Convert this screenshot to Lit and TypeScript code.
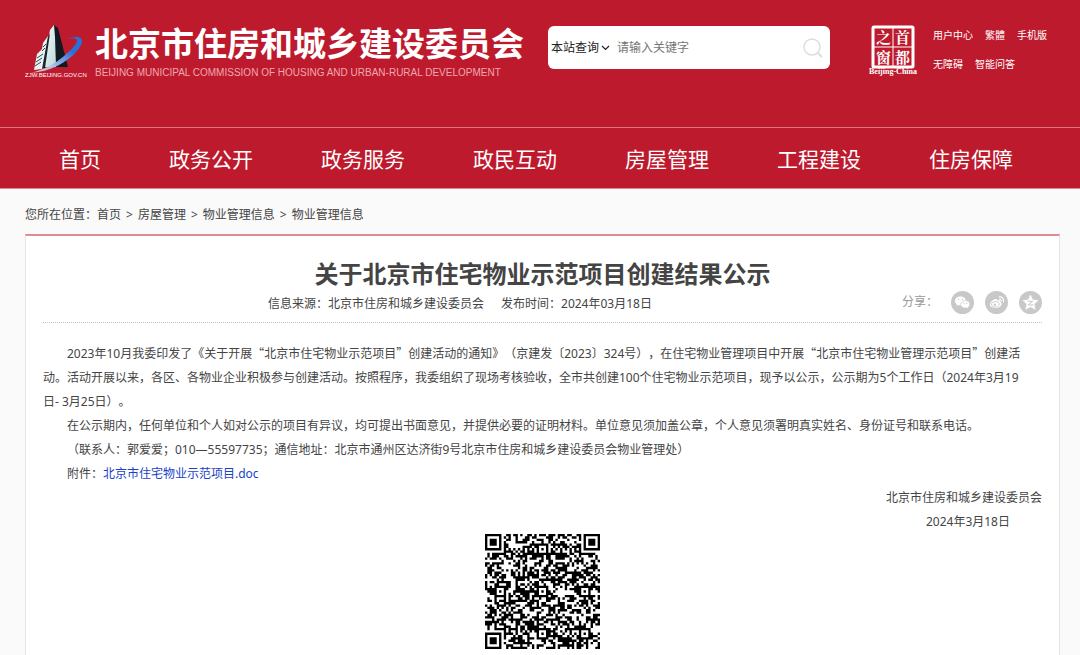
import { LitElement, html, css } from "lit";
import { customElement } from "lit/decorators.js";

const NAV = ["首页", "政务公开", "政务服务", "政民互动", "房屋管理", "工程建设", "住房保障"];
const CRUMBS = ["首页", "房屋管理", "物业管理信息", "物业管理信息"];
const LINKS = ["用户中心", "繁體", "手机版", "无障碍", "智能问答"];

/** Builds the module path of a 49 x 49 code: finders, timing, alignment and data cells. */
function qrPath(): string {
  const n = 49;
  const centers = [6, 24, 42];
  let seed = 20240318;
  const next = (): number => {
    seed = (seed + 0x6d2b79f5) | 0;
    let t = Math.imul(seed ^ (seed >>> 15), 1 | seed);
    t = (t + Math.imul(t ^ (t >>> 7), 61 | t)) ^ t;
    return ((t ^ (t >>> 14)) >>> 0) / 4294967296;
  };
  const finder = (x: number, y: number): number | null => {
    for (const [fx, fy] of [[3, 3], [n - 4, 3], [3, n - 4]]) {
      const d = Math.max(Math.abs(x - fx), Math.abs(y - fy));
      if (d <= 4) return d === 4 || d === 2 ? 0 : 1;
    }
    return null;
  };
  const align = (x: number, y: number): number | null => {
    for (const cx of centers)
      for (const cy of centers) {
        const d = Math.max(Math.abs(x - cx), Math.abs(y - cy));
        if (d <= 2) return d === 1 ? 0 : 1;
      }
    return null;
  };
  let path = "";
  for (let y = 0; y < n; y++)
    for (let x = 0; x < n; x++) {
      const data = next() < 0.53 ? 1 : 0;
      const timing = x === 6 || y === 6 ? (x + y + 1) % 2 : null;
      if (finder(x, y) ?? align(x, y) ?? timing ?? data) path += `M${x} ${y}h1v1h-1z`;
    }
  return path;
}

@customElement("app-root")
export class AppRoot extends LitElement {
  static styles = css`
    :host {
      display: block;
      min-height: 100vh;
      background: #fafafa;
      color: #444;
      font: 12px/24px "Noto Sans", "Noto Sans CJK SC", sans-serif;
      text-spacing-trim: space-all;
    }
    * { box-sizing: border-box; }
    a { color: inherit; text-decoration: none; }
    h1, p, ul, ol { margin: 0; padding: 0; }
    ul, ol { list-style: none; }
    .banner { background: #be1a2d; color: #fff; border-bottom: 1px solid #dc8a93; }
    .top {
      display: flex;
      align-items: flex-start;
      height: 127px;
      padding: 20px 0 0 24px;
    }
    .brand { display: flex; flex: none; width: 524px; }
    .emblem { flex: none; width: 64px; height: 60px; margin-right: 7px; }
    .site { font: 700 33px/44px "Noto Sans CJK SC", sans-serif; white-space: nowrap; }
    .site-en {
      font: 10px/18px "Liberation Sans", sans-serif;
      color: #f0a8af;
      white-space: nowrap;
    }
    .search {
      display: flex;
      align-items: center;
      flex: 0 1 282px;
      height: 43px;
      margin-top: 6px;
      padding: 0 6px 0 3px;
      background: #fff;
      border-radius: 6px;
    }
    .pick { display: flex; align-items: center; position: relative; }
    .pick select {
      appearance: none;
      border: 0;
      background: none;
      width: 62px;
      padding: 0;
      color: #222;
      font: inherit;
    }
    .pick svg { position: absolute; right: 3px; width: 9px; height: 6px; pointer-events: none; }
    .search input {
      flex: 1;
      min-width: 0;
      margin-left: 4px;
      padding: 0;
      border: 0;
      outline: 0;
      background: none;
      font: inherit;
    }
    .search input::placeholder { color: #757575; opacity: 1; }
    .search button { border: 0; background: none; padding: 0; width: 22px; height: 22px; }
    .search button svg { display: block; }
    .capital { flex: none; width: 50px; height: 52px; margin: 4px 0 0 38px; }
    .links {
      display: flex;
      flex-wrap: wrap;
      width: 130px;
      margin: 3px 0 0 15px;
      font-size: 10px;
      gap: 5px 12px;
    }
    .nav { border-top: 1px solid #e0737f; }
    .nav ul { display: flex; justify-content: space-between; padding: 2px 67px 0 59px; }
    .nav a { display: block; font-size: 21px; line-height: 58px; }
    .page { padding: 0 20px 0 25px; }
    .crumbs { padding: 14px 0 7px; }
    .crumbs ol { display: flex; }
    .crumbs li + li::before { content: ">"; margin: 0 5px; }
    .article {
      background: #fff;
      border: 1px solid #e4e4e4;
      border-top: 2px solid #e08a94;
      padding: 20px 17px 8px;
    }
    .article h1 { font-size: 24px; line-height: 36px; text-align: center; }
    .meta {
      display: flex;
      justify-content: space-between;
      align-items: flex-start;
      padding-bottom: 6px;
      margin-bottom: 18px;
      border-bottom: 1px dotted #c4c4c4;
    }
    .source { margin-left: 225px; display: flex; gap: 17px; }
    .share { display: flex; align-items: center; gap: 11px; height: 20px; color: #999; }
    .share span { margin-right: 2px; }
    .share a { display: flex; }
    .share svg { width: 23px; height: 23px; }
    .body p { text-indent: 2em; }
    .quote { font-family: "Noto Sans CJK SC", sans-serif; }
    .keep { white-space: nowrap; }
    .doc { color: #1a3fc9; }
    .body .sign { text-align: right; }
    .body .date { padding-right: 32px; }
    .code { display: block; width: 115px; height: 115px; margin: 0 auto; }
  `;

  private quoted(text: string) {
    return html`<span class="quote">“</span>${text}<span class="quote">”</span>`;
  }

  render() {
    return html`
      <header class="banner">
        <div class="top">
          <div class="brand">
            <svg class="emblem" viewBox="0 0 64 60" aria-hidden="true">
              <defs>
                <linearGradient id="sweep" x1="0" y1="1" x2="1" y2="0">
                  <stop offset="0" stop-color="#fff" stop-opacity="0.700" />
                  <stop offset="0.400" stop-color="#8fb0e8" />
                  <stop offset="0.700" stop-color="#2a6fd6" />
                </linearGradient>
                <linearGradient id="face" x1="0" y1="0" x2="1" y2="1">
                  <stop offset="0" stop-color="#fff" />
                  <stop offset="1" stop-color="#b9d8d8" />
                </linearGradient>
              </defs>
              <path d="M30 5l4 3 10 39H32L29 12z" fill="#101a20" />
              <path d="M30 5l-4 5-7 37h13l-1-30z" fill="url(#face)" />
              <path d="M26 13l-5 11-5 25 5-1z" fill="#16242b" />
              <path d="M24 16l-5 7-1 6-5 5-3 16 8-1z" fill="#e9f2f2" />
              <path d="M13 38l6-4M12 42l6-4M11 46l6-4M19 27l3-3M18 31l3-3" stroke="#34464d" />
              <path d="M43 19c8-3 15-3 15 2 0 8-14 20-25 25-8 4-17 6-26 7 14-4 24-9 33-17 8-7 14-13 13-16-1-2-5-2-10-1z" fill="url(#sweep)" />
              <text x="1" y="57" font-family="Liberation Sans" font-size="6" fill="#fff">ZJW.BEIJING.GOV.CN</text>
            </svg>
            <div>
              <div class="site">北京市住房和城乡建设委员会</div>
              <div class="site-en">BEIJING MUNICIPAL COMMISSION OF HOUSING AND URBAN-RURAL DEVELOPMENT</div>
            </div>
          </div>
          <form class="search">
            <div class="pick">
              <select aria-label="查询范围"><option>本站查询</option></select>
              <svg viewBox="0 0 9 6"><path d="M1 1l3.500 3.500L8 1" fill="none" stroke="#222" stroke-width="1.200" /></svg>
            </div>
            <input type="text" placeholder="请输入关键字" aria-label="关键字" />
            <button type="button" aria-label="搜索">
              <svg width="22" height="22" viewBox="0 0 22 22" fill="none" stroke="#ddd" stroke-width="1.500"><circle cx="10" cy="10" r="8" /><path d="M16 16l4 4" stroke-width="2" /></svg>
            </button>
          </form>
          <svg class="capital" viewBox="0 0 50 52" aria-label="首都之窗">
            <rect x="5" y="3" width="40" height="40" rx="1" fill="none" stroke="#fff" stroke-width="3" />
            <path d="M25 3v40M5 23h40" stroke="#fff" />
            <g fill="#fff" font-family="Noto Serif CJK SC, Noto Sans CJK SC" font-size="15" font-weight="700">
              <text x="8" y="19">之</text><text x="27" y="19">首</text><text x="8" y="39">窗</text><text x="27" y="39">都</text>
            </g>
            <text x="1" y="50" fill="#fff" font-family="Liberation Serif" font-weight="700" font-size="8">Beijing-China</text>
          </svg>
          <div class="links">${LINKS.map((t) => html`<a href="#">${t}</a>`)}</div>
        </div>
        <nav class="nav"><ul>${NAV.map((t) => html`<li><a href="#">${t}</a></li>`)}</ul></nav>
      </header>
      <main class="page">
        <nav class="crumbs"><ol><li>您所在位置：<a href="#">${CRUMBS[0]}</a></li>${CRUMBS.slice(1).map((t) => html`<li><a href="#">${t}</a></li>`)}</ol></nav>
        <article class="article">
          <h1>关于北京市住宅物业示范项目创建结果公示</h1>
          <div class="meta">
            <div class="source"><span>信息来源：北京市住房和城乡建设委员会</span><span>发布时间：2024年03月18日</span></div>
            <div class="share">
              <span>分享：</span>
              <a href="#" aria-label="微信">
                <svg viewBox="0 0 23 23">
                  <circle cx="11.500" cy="11.500" r="11.500" fill="#c8c8c8" />
                  <path d="M9.500 5.500c-3.300 0-5.500 2-5.500 4.400 0 1.400.7 2.600 1.900 3.400l-.5 1.700 2-1c.7.2 1.300.3 2.100.3 3.200 0 5.500-2 5.500-4.400s-2.300-4.400-5.500-4.400z" fill="#fff" />
                  <path d="M14.300 9.500c-2.800 0-4.700 1.700-4.700 3.800s1.900 3.800 4.700 3.800c.6 0 1.100-.1 1.600-.2l1.600.9-.4-1.500c1-.7 1.800-1.800 1.800-3 0-2.100-1.900-3.800-4.600-3.800z" fill="#fff" stroke="#c8c8c8" stroke-width=".7" />
                  <path d="M7.600 8.400h.01M11.200 8.400h.01M12.800 12.200h.01M15.800 12.200h.01" stroke="#c8c8c8" stroke-width="1.300" stroke-linecap="round" />
                </svg>
              </a>
              <a href="#" aria-label="微博">
                <svg viewBox="0 0 23 23">
                  <circle cx="11.500" cy="11.500" r="11.500" fill="#c8c8c8" />
                  <path d="M9.700 8.300c1.300-.5 2.500-.3 2.300 1.200 1.600-.6 3.400-.5 2.900 1.200 2.500.8 2.200 3.300.2 4.800-2.600 2-7.600 2-9.400.1-2.200-2.200.8-6.200 4-7.300z" fill="#fff" />
                  <ellipse cx="10.300" cy="13.300" rx="4" ry="2.700" fill="none" stroke="#c8c8c8" stroke-width=".8" transform="rotate(-8 10.300 13.300)" />
                  <circle cx="9.800" cy="13.600" r="1.200" fill="#c8c8c8" />
                  <path d="M14.300 8.300c1.400-.2 2.300.8 1.900 2.100M14 6c3-.6 5.300 1.700 4.400 4.900" fill="none" stroke="#fff" stroke-width="1.100" stroke-linecap="round" />
                </svg>
              </a>
              <a href="#" aria-label="QQ空间">
                <svg viewBox="0 0 23 23">
                  <circle cx="11.500" cy="11.500" r="11.500" fill="#c8c8c8" />
                  <path d="M11.500 4l2.200 4.900 5.300.6-3.900 3.600 1.100 5.200-4.700-2.600-4.700 2.600 1.100-5.200L4 9.500l5.300-.6z" fill="#fff" stroke="#fff" stroke-width=".6" stroke-linejoin="round" />
                  <path d="M8.800 10.300h5l-4.600 3.500c2 .4 3.700.3 5.300 0" fill="none" stroke="#c8c8c8" stroke-width="1" />
                </svg>
              </a>
            </div>
          </div>
          <div class="body">
            <p>2023年10月我委印发了《关于开展${this.quoted("北京市住宅物业示范项目")}创建活动的通知》（京建发〔2023〕324号），在住宅物业管理项目中开展${this.quoted("北京市住宅物业管理示范项目")}创建活动。活动开展以来，各区、各物业企业积极参与创建活动。按照程序，我委组织了现场考核验收，全市共创建100个住宅物业示范项目，现予以公示，公示期为5个工作日（2024年3月19<span class="keep">日- 3月25日）。</span></p>
            <p>在公示期内，任何单位和个人如对公示的项目有异议，均可提出书面意见，并提供必要的证明材料。单位意见须加盖公章，个人意见须署明真实姓名、身份证号和联系电话。</p>
            <p>（联系人：郭爱爱；010—55597735；通信地址：北京市通州区达济街9号北京市住房和城乡建设委员会物业管理处）</p>
            <p>附件：<a class="doc" href="#">北京市住宅物业示范项目.doc</a></p>
            <p class="sign">北京市住房和城乡建设委员会</p>
            <p class="sign date">2024年3月18日</p>
          </div>
          <svg class="code" viewBox="0 0 49 49" role="img" aria-label="二维码"><path d=${qrPath()} fill="#000" /></svg>
        </article>
      </main>
    `;
  }
}
